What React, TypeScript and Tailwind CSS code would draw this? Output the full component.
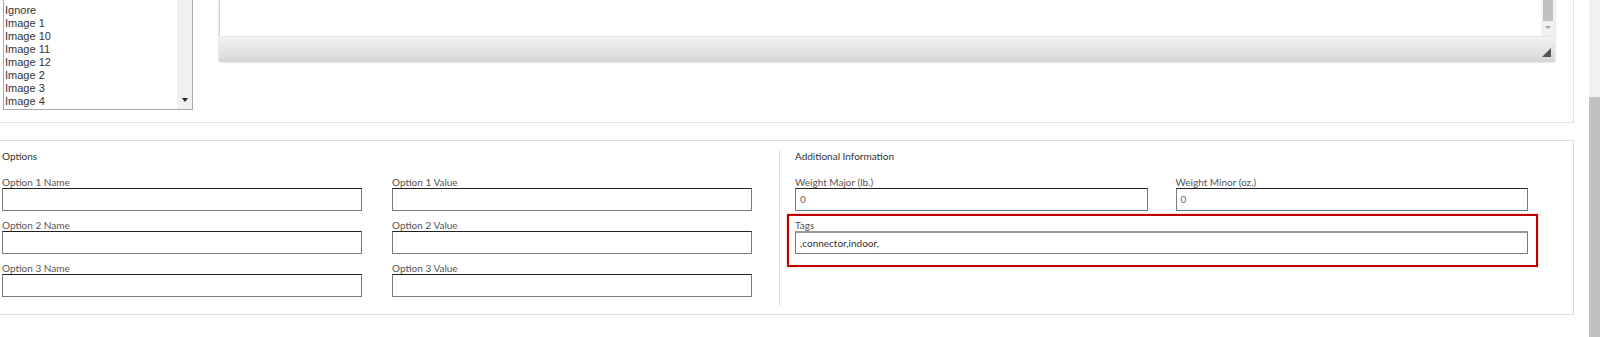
const images = ["Ignore", "Image 1", "Image 10", "Image 11", "Image 12", "Image 2", "Image 3", "Image 4"];

const labelFont = { fontFamily: "Lato, 'Open Sans', sans-serif" };

function Field({ label, value = "", muted = false, topGray = false }: any) {
  return (
    <div className="flex flex-col">
      <label className="h-[12px] text-[10px] leading-[12px] text-[#555]" style={labelFont}>
        {label}
      </label>
      <div
        className={`h-[23px] border border-[#7a7a7a] ${topGray ? "border-t-[#9a9a9a] border-t-2" : "border-t-[#222]"} bg-white px-[4px] flex items-center text-[10px] ${muted ? "text-[#666]" : "text-[#333]"}`}
        style={labelFont}
      >
        {value}
      </div>
    </div>
  );
}

export default function App() {
  return (
    <div className="flex w-[1600px] h-[337px] overflow-hidden bg-white">
      <div className="w-[1589px] flex flex-col">
        {/* top panel */}
        <div className="h-[123px] w-[1574px] border-r border-b border-[#e2e2e2] flex items-start">
          <div className="ml-[3px] w-[190px] h-[110px] border-x border-b border-[#aaa] flex">
            <ul
              className="flex-1 pt-[4px] pl-[1px] text-[11px] leading-[13px] text-[#333]"
              style={{ fontFamily: "'Liberation Sans', Arial, sans-serif" }}
            >
              {images.map((img) => (
                <li key={img}>{img}</li>
              ))}
            </ul>
            <div className="w-[15px] bg-[#f0f0f0] flex items-end justify-center pb-[7px]">
              <div className="w-0 h-0 border-x-[3px] border-x-transparent border-t-[4px] border-t-[#222]" />
            </div>
          </div>

          {/* editor */}
          <div className="ml-[26px] w-[1336px] h-[61px] flex flex-col shadow-[0_1px_2px_rgba(0,0,0,0.25)]">
            <div className="h-[36px] flex border-l border-[#d0d0d0] bg-white">
              <div className="flex-1" />
              <div className="w-[14px] bg-[#f1f1f1] flex flex-col items-center">
                <div className="w-[10px] h-[21px] bg-[#c1c1c1]" />
                <div className="mt-[5px] w-0 h-0 border-x-[3px] border-x-transparent border-t-[3px] border-t-[#a3a3a3]" />
              </div>
            </div>
            <div className="flex-1 border-t border-[#e8e8e8] bg-gradient-to-b from-[#f2f2f2] to-[#d8d8d8] flex items-end justify-end pr-[4px] pb-[4px]">
              <svg width="9" height="9" viewBox="0 0 9 9">
                <polygon points="9,0 9,9 0,9" fill="#555" />
              </svg>
            </div>
          </div>
        </div>

        {/* bottom panel */}
        <div className="mt-[17px] h-[175px] w-[1574px] border border-l-0 border-[#dcdcdc] pt-[9px] flex">
          <div className="w-[779px] pl-[2px]">
            <div className="h-[12px] text-[10px] leading-[12px] text-[#333]" style={labelFont}>
              Options
            </div>
            <div className="mt-[14px] w-[750px] grid grid-cols-2 gap-x-[30px] gap-y-[8px]">
              <Field label="Option 1 Name" />
              <Field label="Option 1 Value" />
              <Field label="Option 2 Name" />
              <Field label="Option 2 Value" />
              <Field label="Option 3 Name" />
              <Field label="Option 3 Value" />
            </div>
          </div>

          <div className="w-px h-[156px] bg-[#dcdcdc]" />

          <div className="pl-[15px] w-[750px]">
            <div className="h-[12px] text-[10px] leading-[12px] text-[#333]" style={labelFont}>
              Additional Information
            </div>
            <div className="mt-[14px] w-[733px] grid grid-cols-2 gap-x-[28px]">
              <Field label="Weight Major (lb.)" value="0" muted />
              <Field label="Weight Minor (oz.)" value="0" muted />
            </div>
            <div className="relative mt-[8px] w-[733px]">
              <Field label="Tags" value=",connector,indoor," topGray />
              <div className="absolute -left-[8px] -top-[5px] w-[751px] h-[53px] border-2 border-[#c00000] shadow-[0_0_2px_rgba(200,0,0,0.35)] pointer-events-none" />
            </div>
          </div>
        </div>
      </div>

      {/* page scrollbar */}
      <div className="w-[11px] flex flex-col">
        <div className="h-[97px] bg-[#f1f1f1]" />
        <div className="flex-1 bg-[#c1c1c1]" />
      </div>
    </div>
  );
}
